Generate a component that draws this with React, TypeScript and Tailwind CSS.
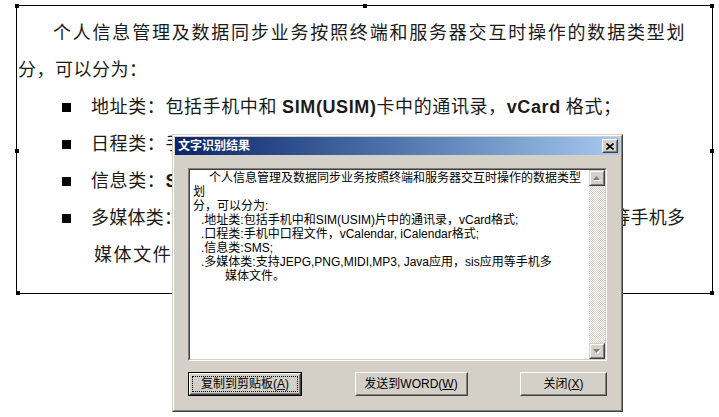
import type { ReactNode } from 'react';

const docFont = { fontFamily: '"Liberation Serif", "Noto Sans CJK SC", serif' };
const uiFont = { fontFamily: '"Liberation Sans", "Noto Sans CJK SC", sans-serif' };

function B({ children }: { children: ReactNode }) {
  return (
    <span className="font-bold" style={{ fontFamily: '"Liberation Sans", sans-serif' }}>
      {children}
    </span>
  );
}

function Bullet({ children }: { children: ReactNode }) {
  return (
    <div className="flex h-[37px] items-center whitespace-pre tracking-[0.6px]">
      <span className="ml-[45px] mr-[20px] inline-block h-[9px] w-[9px] bg-black" />
      {children}
    </div>
  );
}

function WinButton({
  children,
  focused,
  width,
}: {
  children: ReactNode;
  focused?: boolean;
  width: string;
}) {
  return (
    <div className={`${width} h-[24px] ${focused ? 'border border-black' : ''}`}>
      <div className="h-full w-full border border-t-white border-l-white border-r-[#404040] border-b-[#404040]">
        <div className="flex h-full w-full border border-t-[#d4d0c8] border-l-[#d4d0c8] border-r-[#808080] border-b-[#808080] bg-[#d4d0c8] p-[1px]">
          <div
            className={`flex flex-1 items-center justify-center text-[12px] leading-[14px] text-black ${
              focused ? 'border border-dotted border-black' : ''
            }`}
          >
            {children}
          </div>
        </div>
      </div>
    </div>
  );
}

function ScrollArrow({ down }: { down?: boolean }) {
  return (
    <div className="h-[16px] w-[16px] border border-t-[#d4d0c8] border-l-[#d4d0c8] border-r-[#404040] border-b-[#404040]">
      <div className="flex h-full w-full items-center justify-center border border-t-white border-l-white border-r-[#808080] border-b-[#808080] bg-[#d4d0c8]">
        <svg width="8" height="5" viewBox="0 0 8 5">
          {down ? (
            <>
              <path d="M1 1h7l-3.5 4z" fill="#ffffff" />
              <path d="M0 0h7l-3.5 4z" fill="#808080" />
            </>
          ) : (
            <>
              <path d="M1 5h7l-3.5-4z" fill="#ffffff" />
              <path d="M0 4h7l-3.5-4z" fill="#808080" />
            </>
          )}
        </svg>
      </div>
    </div>
  );
}

function Dialog() {
  const lines: { pl: string; text: string }[] = [
    { pl: 'pl-[16px]', text: '个人信息管理及数据同步业务按照终端和服务器交互时操作的数据类型' },
    { pl: 'pl-0', text: '划' },
    { pl: 'pl-0', text: '分，可以分为:' },
    { pl: 'pl-[8px]', text: '.地址类:包括手机中和SIM(USIM)片中的通讯录，vCard格式;' },
    { pl: 'pl-[8px]', text: '.口程类:手机中口程文件，vCalendar, iCalendar格式;' },
    { pl: 'pl-[8px]', text: '.信息类:SMS;' },
    { pl: 'pl-[8px]', text: '.多媒体类:支持JEPG,PNG,MIDI,MP3, Java应用，sis应用等手机多' },
    { pl: 'pl-[32px]', text: '媒体文件。' },
  ];

  return (
    <div
      className="absolute left-[172px] top-[134px] h-[278px] w-[451px] border border-t-[#d4d0c8] border-l-[#d4d0c8] border-r-[#404040] border-b-[#404040]"
      style={uiFont}
    >
      <div className="flex h-full w-full flex-col border border-t-white border-l-white border-r-[#808080] border-b-[#808080] bg-[#d4d0c8] p-[1px]">
        {/* title bar */}
        <div className="flex h-[18px] items-center justify-between bg-linear-to-r from-[#0a246a] to-[#a6caf0] pl-[3px] pr-[2px]">
          <span className="text-[12px] font-bold leading-none text-white">文字识别结果</span>
          <div className="h-[14px] w-[16px] border border-t-white border-l-white border-r-[#404040] border-b-[#404040]">
            <div className="flex h-full w-full items-center justify-center border border-t-[#d4d0c8] border-l-[#d4d0c8] border-r-[#808080] border-b-[#808080] bg-[#d4d0c8]">
              <svg width="8" height="7" viewBox="0 0 8 7">
                <path d="M0.5 0.5l7 6M7.5 0.5l-7 6" stroke="#000" strokeWidth="1.6" />
              </svg>
            </div>
          </div>
        </div>

        {/* text box */}
        <div className="mx-[13px] mt-[13px] h-[193px] border border-t-[#808080] border-l-[#808080] border-r-white border-b-white">
          <div className="flex h-full w-full border border-t-[#404040] border-l-[#404040] border-r-[#d4d0c8] border-b-[#d4d0c8] bg-white">
            <div className="flex-1 pl-[3px] pt-[1px] text-[12px] leading-[14px] text-black">
              {lines.map((l, i) => (
                <div key={i} className={`${l.pl} whitespace-nowrap`}>
                  {l.text}
                </div>
              ))}
            </div>
            <div className="flex w-[16px] flex-col justify-between bg-[repeating-conic-gradient(#d4d0c8_0%_25%,#ffffff_0%_50%)] bg-[length:2px_2px]">
              <ScrollArrow />
              <ScrollArrow down />
            </div>
          </div>
        </div>

        {/* buttons */}
        <div className="mx-[13px] mt-[11px] flex justify-between">
          <WinButton width="w-[114px]" focused>
            复制到剪贴板(<span className="underline">A</span>)
          </WinButton>
          <WinButton width="w-[113px]">
            发送到WORD(<span className="underline">W</span>)
          </WinButton>
          <WinButton width="w-[87px]">
            关闭(<span className="underline">X</span>)
          </WinButton>
        </div>
      </div>
    </div>
  );
}

export default function App() {
  return (
    <div className="relative h-[417px] w-[719px] overflow-hidden bg-white">
      <div
        className="relative ml-[16px] mt-[5px] h-[289px] w-[697px] border-[1.5px] border-black text-[18px] tracking-[0.5px] text-[#1a1a1a]"
        style={docFont}
      >
        {/* selection handles */}
        <span className="absolute -left-[2px] -top-[2px] h-[4px] w-[4px] bg-black" />
        <span className="absolute -top-[2px] left-[346px] h-[4px] w-[4px] bg-black" />
        <span className="absolute -right-[2px] -top-[2px] h-[4px] w-[4px] bg-black" />
        <span className="absolute -left-[2px] top-[143px] h-[4px] w-[4px] bg-black" />
        <span className="absolute -right-[2px] top-[143px] h-[4px] w-[4px] bg-black" />
        <span className="absolute -bottom-[2px] -left-[1px] h-[4px] w-[4px] bg-black" />
        <span className="absolute -bottom-[2px] -right-[2px] h-[4px] w-[4px] bg-black" />

        <div className="pt-[9px]">
          <div className="flex h-[37px] items-center pl-[36px]">
            <div className="w-[632px] whitespace-nowrap text-justify [text-align-last:justify]">
              个人信息管理及数据同步业务按照终端和服务器交互时操作的数据类型划
            </div>
          </div>
          <div className="flex h-[37px] items-center pl-[1px]">分，可以分为：</div>
          <Bullet>
            地址类：包括手机中和 <B>SIM(USIM)</B>卡中的通讯录，<B>vCard</B> 格式；
          </Bullet>
          <Bullet>
            日程类：手机中日程文件，<B>vCalendar</B>、<B>iCalendar</B> 格式；
          </Bullet>
          <Bullet>
            信息类：<B>SMS</B>；
          </Bullet>
          <Bullet>
            <div className="w-[594px] whitespace-nowrap text-justify tracking-normal [text-align-last:justify]">
              多媒体类：支持<B>JEPG</B>、<B>PNG</B>、<B>MIDI</B>、<B>MP3</B>、<B>Java</B>应用、<B>sis</B>应用等手机多
            </div>
          </Bullet>
          <div className="flex h-[37px] items-center pl-[77px] tracking-[1.6px]">媒体文件。</div>
        </div>
      </div>
      <Dialog />
    </div>
  );
}
